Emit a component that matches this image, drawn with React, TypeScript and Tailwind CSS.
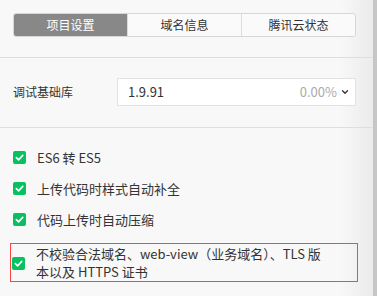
import { ChevronDown } from "lucide-react";

const TABS = ["项目设置", "域名信息", "腾讯云状态"];
const OPTIONS = ["ES6 转 ES5", "上传代码时样式自动补全", "代码上传时自动压缩"];

function Check() {
  return (
    <span className="flex h-[13px] w-[13px] shrink-0 items-center justify-center rounded-[2px] bg-[#07c160]">
      <svg width="9" height="9" viewBox="0 0 10 10" fill="none">
        <path d="M1.5 5.2 4 7.6 8.6 2.6" stroke="white" strokeWidth="1.8" strokeLinecap="round" strokeLinejoin="round" />
      </svg>
    </span>
  );
}

export default function App() {
  return (
    <div
      className="flex h-[296px] w-[377px] overflow-hidden text-[#333]"
      style={{ fontFamily: '"Noto Sans CJK SC", "Noto Sans", sans-serif' }}
    >
      <div className="flex-1 bg-[linear-gradient(to_right,#f8f8f8_340px,#ebebeb)]">
        <div className="px-[13px] pb-5 pt-[13px]">
          <div className="flex h-6 w-[343px] overflow-hidden rounded-[3px] border border-[#d6d6d6] text-[12px]">
            {TABS.map((t, i) => (
              <div
                key={t}
                className={
                  i === 0
                    ? "flex flex-1 items-center justify-center bg-[#888888] text-white"
                    : "flex flex-1 items-center justify-center border-l border-[#dcdcdc] bg-[#fafafa] text-[#333]"
                }
              >
                {t}
              </div>
            ))}
          </div>
        </div>
        <div className="h-px bg-[#dedede]" />

        <div className="flex items-center pb-[21px] pl-[13px] pr-[17px] pt-5">
          <span className="w-[104px] text-[12px]">调试基础库</span>
          <div className="flex h-7 flex-1 items-center border border-[#e2e2e2] bg-white pl-[10px] pr-[5px] text-[13px]">
            <span className="flex-1">1.9.91</span>
            <span className="text-[#aaa]">0.00%</span>
            <ChevronDown size={10} strokeWidth={3} className="ml-[3px] text-[#333]" />
          </div>
        </div>
        <div className="h-px bg-[#dedede]" />

        <div className="pt-[14px] text-[13px]">
          {OPTIONS.map((o) => (
            <div key={o} className="flex h-[31px] items-center gap-[11px] pl-[13px]">
              <Check />
              <span>{o}</span>
            </div>
          ))}
          <div className="ml-[10px] mr-[15px] mt-2 flex items-center gap-[11px] pb-px pl-[2px] pt-[2px] shadow-[inset_0_0_0_1px_#ff4444]">
            <Check />
            <span className="leading-[18px]">
              不校验合法域名、web-view（业务域名）、TLS 版
              <br />
              本以及 HTTPS 证书
            </span>
          </div>
        </div>
      </div>
      <div className="w-[4px] bg-[#c6c6c6]" />
    </div>
  );
}
